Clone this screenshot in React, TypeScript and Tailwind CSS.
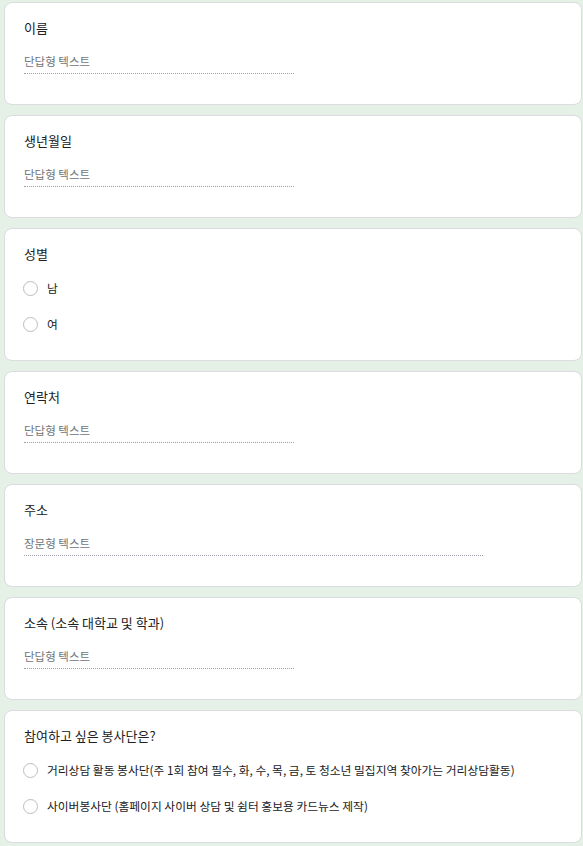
import React from "react";

const font = { fontFamily: '"Noto Sans CJK KR", "Noto Sans", sans-serif' };

function Card({ children }: { children: React.ReactNode }) {
  return (
    <div className="w-[578px] ml-[4px] bg-white border border-[#dadce0] rounded-[8px] pt-[15px] px-[19px]">
      {children}
    </div>
  );
}

function Title({ text }: { text: string }) {
  return <div className="text-[13px] leading-[20px] text-[#202124]">{text}</div>;
}

function TextQ({ title, placeholder, wide }: { title: string; placeholder: string; wide?: boolean }) {
  return (
    <Card>
      <Title text={title} />
      <div
        className={`mt-[15px] mb-[30px] pb-[4px] border-b border-dotted border-[#9aa0a6] ${
          wide ? "w-[459px]" : "w-[270px]"
        }`}
      >
        <div className="text-[11.5px] leading-[16px] text-[#70757a]">{placeholder}</div>
      </div>
    </Card>
  );
}

function RadioQ({ title, options }: { title: string; options: string[] }) {
  return (
    <Card>
      <Title text={title} />
      <div className="mt-[6px] pb-[18px]">
        {options.map((o) => (
          <div key={o} className="h-[36px] flex items-center">
            <div className="w-[15px] h-[15px] rounded-full border-[1.5px] border-[#bdbdbd] shrink-0 -ml-[1px]" />
            <div className="ml-[9px] text-[11.75px] leading-[16px] text-[#202124]">{o}</div>
          </div>
        ))}
      </div>
    </Card>
  );
}

export default function App() {
  return (
    <div className="min-h-[846px] bg-[#e5f1e6] pt-[2px] pb-[6px] flex flex-col gap-[10px]" style={font}>
      <TextQ title="이름" placeholder="단답형 텍스트" />
      <TextQ title="생년월일" placeholder="단답형 텍스트" />
      <RadioQ title="성별" options={["남", "여"]} />
      <TextQ title="연락처" placeholder="단답형 텍스트" />
      <TextQ title="주소" placeholder="장문형 텍스트" wide />
      <TextQ title="소속 (소속 대학교 및 학과)" placeholder="단답형 텍스트" />
      <RadioQ
        title="참여하고 싶은 봉사단은?"
        options={[
          "거리상담 활동 봉사단(주 1회 참여 필수, 화, 수, 목, 금, 토 청소년 밀집지역 찾아가는 거리상담활동)",
          "사이버봉사단 (홈페이지 사이버 상담 및 쉼터 홍보용 카드뉴스 제작)",
        ]}
      />
    </div>
  );
}
